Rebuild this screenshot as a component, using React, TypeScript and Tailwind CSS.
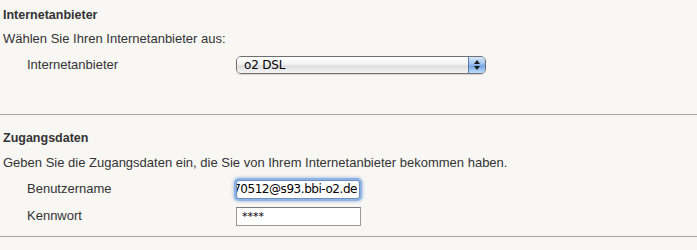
import React from 'react';

const SelectArrows = () => (
  <svg width="8" height="12" viewBox="0 0 8 12">
    <path d="M4 1 L7 5 L1 5 Z" fill="#1a1a1a" />
    <path d="M4 11 L7 7 L1 7 Z" fill="#1a1a1a" />
  </svg>
);

const App: React.FunctionComponent = () => (
  <div className="w-[697px] h-[250px] bg-[#f8f7f3] text-[#333333] font-['Liberation_Sans',Arial,sans-serif] overflow-hidden">
    <div className="pl-[3px] pt-[7px]">
      <div className="text-[12.5px] font-bold leading-[16px]">Internetanbieter</div>
      <div className="mt-[8px] text-[13px] leading-[16px]">Wählen Sie Ihren Internetanbieter aus:</div>
      <div className="mt-[9px] flex items-center h-[18px]">
        <div className="w-[233px] pl-[24px] text-[13px]">Internetanbieter</div>
        <div className="w-[250px] h-[18px] flex rounded-[5px] border border-[#6f6f6f] overflow-hidden shadow-[0_1px_1px_rgba(0,0,0,0.15)]">
          <div className="flex-1 flex items-center pl-[7px] bg-[linear-gradient(#ffffff,#f3f3f3_45%,#dedede_55%,#f4f4f4)] text-[12px] text-black font-['DejaVu_Sans',sans-serif] tracking-[-0.2px]">
            o2 DSL
          </div>
          <div className="w-[17px] flex items-center justify-center border-l border-[#5a7aa8] bg-[linear-gradient(#d8e8fa,#9cc2ee_45%,#73a4e2_55%,#bfe0fd)]">
            <SelectArrows />
          </div>
        </div>
      </div>
    </div>
    <div className="mt-[40px] h-px bg-[#a3a3a3]" />
    <div className="pl-[3px] pt-[15px]">
      <div className="text-[12.5px] font-bold leading-[16px]">Zugangsdaten</div>
      <div className="mt-[9px] text-[13px] leading-[16px]">
        Geben Sie die Zugangsdaten ein, die Sie von Ihrem Internetanbieter bekommen haben.
      </div>
      <div className="mt-[8px] flex items-center h-[20px]">
        <div className="w-[233px] pl-[24px] text-[13px]">Benutzername</div>
        <div className="w-[124px] h-[19px] flex items-center justify-end overflow-hidden bg-white border border-[#6d8fbf] rounded-[3px] shadow-[0_0_0_2px_#8fb4e3,0_0_3px_3px_rgba(120,160,220,0.5)] pr-[2px]">
          <span className="whitespace-nowrap text-[12px] text-black font-['DejaVu_Sans',sans-serif] tracking-[-0.45px]">
            70512@s93.bbi-o2.de
          </span>
        </div>
      </div>
      <div className="mt-[7px] flex items-center h-[20px]">
        <div className="w-[233px] pl-[24px] text-[13px]">Kennwort</div>
        <div className="w-[125px] h-[19px] flex items-center bg-white border border-[#9a9a9a] border-t-[#7a7a7a] pl-[5px]">
          <span className="text-[11px] text-black font-['DejaVu_Sans',sans-serif] leading-none">****</span>
        </div>
      </div>
    </div>
    <div className="mt-[10px] h-px bg-[#a3a3a3]" />
  </div>
);

export default App;
